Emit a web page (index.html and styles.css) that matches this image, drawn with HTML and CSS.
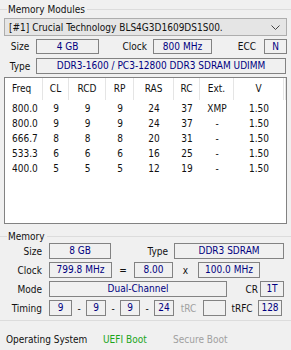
FILE: index.html
```html
<!DOCTYPE html>
<html lang="en">
<head>
    <meta charset="UTF-8">
    <meta name="viewport" content="width=device-width, initial-scale=1.0">
    <title>SPD</title>
    <link rel="stylesheet" href="styles.css">
</head>
<body>

    <div class="panel">
        <div class="group-title"><span>Memory Modules</span></div>

        <div class="module-select">
            <span>[#1] Crucial Technology BLS4G3D1609DS1S00.</span>
            <svg width="9" height="5" viewBox="0 0 9 5"><polyline points="0.5,0.5 4.5,4.5 8.5,0.5" fill="none" stroke="#444" stroke-width="1"/></svg>
        </div>

        <div class="row top-row">
            <span class="lbl lbl-size">Size</span>
            <span class="box w-size">4 GB</span>
            <span class="lbl lbl-clock">Clock</span>
            <span class="box w-clock">800 MHz</span>
            <span class="lbl lbl-ecc">ECC</span>
            <span class="box w-ecc">N</span>
        </div>

        <div class="row type-row">
            <span class="lbl lbl-size">Type</span>
            <span class="box w-type">DDR3-1600 / PC3-12800 DDR3 SDRAM UDIMM</span>
        </div>

        <div class="spd-table">
            <div class="thead">
                <span class="left">Freq</span><span>CL</span><span>RCD</span><span>RP</span><span>RAS</span><span>RC</span><span>Ext.</span><span>V</span><span></span>
            </div>
            <div class="tbody">
                <div class="tr"><span class="left">800.0</span><span>9</span><span>9</span><span>9</span><span>24</span><span>37</span><span>XMP</span><span>1.50</span></div>
                <div class="tr"><span class="left">800.0</span><span>9</span><span>9</span><span>9</span><span>24</span><span>37</span><span>-</span><span>1.50</span></div>
                <div class="tr"><span class="left">666.7</span><span>8</span><span>8</span><span>8</span><span>20</span><span>31</span><span>-</span><span>1.50</span></div>
                <div class="tr"><span class="left">533.3</span><span>6</span><span>6</span><span>6</span><span>16</span><span>25</span><span>-</span><span>1.50</span></div>
                <div class="tr"><span class="left">400.0</span><span>5</span><span>5</span><span>5</span><span>12</span><span>19</span><span>-</span><span>1.50</span></div>
            </div>
        </div>

        <div class="group-title mem-title"><span>Memory</span></div>

        <div class="mem">
            <div class="row">
                <span class="lbl mlbl">Size</span>
                <span class="box m-size">8 GB</span>
                <span class="lbl lbl-mtype">Type</span>
                <span class="box m-type">DDR3 SDRAM</span>
            </div>
            <div class="row">
                <span class="lbl mlbl">Clock</span>
                <span class="box m-clock">799.8 MHz</span>
                <span class="op op-eq">=</span>
                <span class="box m-mult">8.00</span>
                <span class="op op-x">x</span>
                <span class="box m-bus">100.0 MHz</span>
            </div>
            <div class="row">
                <span class="lbl mlbl">Mode</span>
                <span class="box m-mode">Dual-Channel</span>
                <span class="lbl lbl-cr">CR</span>
                <span class="box m-small">1T</span>
            </div>
            <div class="row">
                <span class="lbl mlbl">Timing</span>
                <span class="box t-first">9</span>
                <span class="op dash">-</span>
                <span class="box t-box">9</span>
                <span class="op dash">-</span>
                <span class="box t-box">9</span>
                <span class="op dash">-</span>
                <span class="box t-box">24</span>
                <span class="lbl lbl-trc">tRC</span>
                <span class="box t-empty"></span>
                <span class="lbl lbl-trfc">tRFC</span>
                <span class="box m-small">128</span>
            </div>
        </div>

        <div class="status">
            <span class="os">Operating System</span>
            <span class="uefi">UEFI Boot</span>
            <span class="secure">Secure Boot</span>
        </div>
    </div>

</body>
</html>
```

FILE: styles.css
```css
body {
    margin: 0;
    padding: 0;
    background-color: #F0F0F0;
    font-family: "DejaVu Sans Condensed", "DejaVu Sans", sans-serif;
    font-size: 10px;
    color: #111;
}
.panel {
    width: 291px;
    height: 350px;
    overflow: hidden;
}
.group-title {
    display: flex;
    align-items: center;
    height: 14px;
    margin-top: 2px;
}
.group-title::before {
    content: "";
    width: 7px;
    border-top: 1px solid #DCDCDC;
}
.group-title::after {
    content: "";
    flex: 1;
    border-top: 1px solid #DCDCDC;
}
.group-title span {
    padding: 0 2px 0 1px;
}
.module-select {
    display: flex;
    align-items: center;
    justify-content: space-between;
    height: 16px;
    margin: 2px 4px 0 4px;
    padding: 0 6px 0 4px;
    background-color: #E5E5E5;
    border: 1px solid #ADADAD;
}
.row {
    display: flex;
    align-items: center;
}
.top-row {
    margin-top: 3px;
    padding-left: 4px;
}
.type-row {
    margin-top: 4px;
    padding-left: 4px;
}
.lbl {
    box-sizing: border-box;
    white-space: nowrap;
}
.box {
    box-sizing: border-box;
    height: 15px;
    border: 1px solid #828282;
    color: #000080;
    text-align: center;
    line-height: 13px;
    white-space: nowrap;
}
.type-row .box {
    height: 16px;
    line-height: 14px;
}
.lbl-size { width: 32px; text-align: center; }
.w-size { width: 63px; }
.lbl-clock { width: 54px; text-align: right; padding-right: 6px; }
.w-clock { width: 59px; }
.lbl-ecc { width: 52px; text-align: right; padding-right: 8px; }
.w-ecc { width: 23px; }
.w-type { width: 250px; }

/* SPD timings table */
.spd-table {
    box-sizing: border-box;
    height: 147px;
    margin: 3px 4px 0 4px;
    background-color: #fff;
    border: 1px solid #828282;
}
.thead, .tr {
    display: grid;
    grid-template-columns: 38px 26px 37px 28px 40px 26px 34px 50px 1fr;
}
.thead {
    height: 22px;
    line-height: 22px;
}
.thead span {
    text-align: center;
    border-right: 1px solid #E5E5E5;
}
.tbody {
    padding-top: 1px;
}
.tr {
    height: 15px;
    line-height: 15px;
}
.tr span {
    text-align: center;
}
.thead .left, .tr .left {
    text-align: left;
    padding-left: 7px;
}

/* Memory section */
.mem-title {
    margin-top: 5px;
}
.mem {
    display: flex;
    flex-direction: column;
    gap: 3px;
}
.mem .box {
    height: 16px;
    line-height: 14px;
}
.mlbl { width: 49px; text-align: right; padding-right: 7px; }
.m-size { width: 62px; }
.lbl-mtype { width: 63px; text-align: right; padding-right: 6px; }
.m-type { width: 110px; }
.m-clock { width: 63px; }
.op { text-align: center; }
.op-eq { width: 22px; }
.m-mult { width: 39px; }
.op-x { width: 25px; }
.m-bus { width: 62px; }
.m-mode { width: 178px; }
.lbl-cr { width: 33px; text-align: right; padding-right: 2px; }
.m-small { width: 24px; }
.t-first { width: 23px; }
.dash { width: 14px; }
.t-box { width: 20px; }
.lbl-trc { width: 29px; text-align: center; color: #A0A0A0; }
.t-empty { width: 23px; }
.lbl-trfc { width: 32px; text-align: center; }

/* Status bar */
.status {
    display: flex;
    align-items: center;
    height: 36px;
    margin-top: 4px;
    padding-left: 6px;
    border-top: 1px solid #DCDCDC;
}
.os { width: 97px; }
.uefi { width: 70px; color: #1BA51B; }
.secure { color: #A0A0A0; }
```
